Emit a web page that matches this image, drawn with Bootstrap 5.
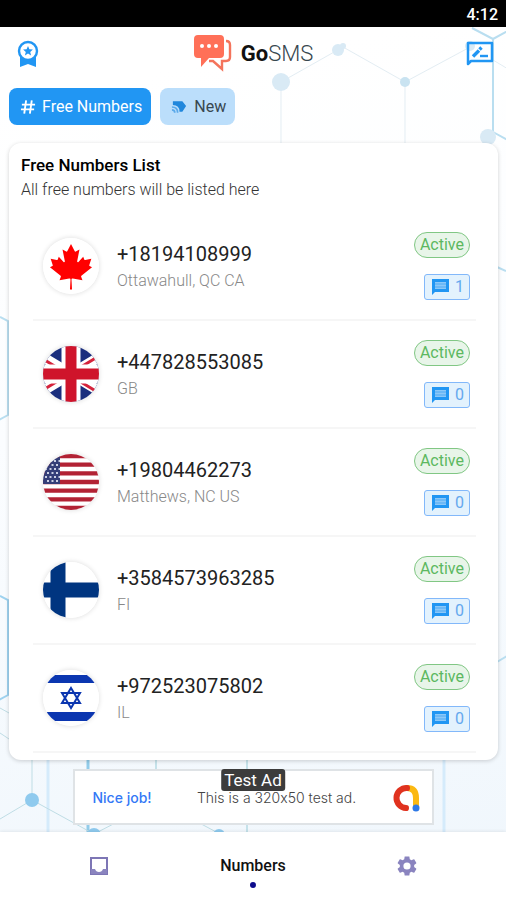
<!DOCTYPE html>
<html lang="en">
<head>
<meta charset="utf-8">
<meta name="viewport" content="width=device-width, initial-scale=1">
<title>GoSMS</title>
<link href="https://cdn.jsdelivr.net/npm/bootstrap@5.3.0/dist/css/bootstrap.min.css" rel="stylesheet">
<style>
body{font-family:Roboto,"Liberation Sans",sans-serif;color:#222;background:#fff}
svg{display:block;flex:none}
.screen{background:linear-gradient(170deg,#fff 10%,#fbfdff 45%,#eff6fc 100%);isolation:isolate;overflow:hidden}
.network{position:absolute;inset:0;z-index:-1}
.status-bar{height:27px;background:#000;color:#fff;font-size:16px;font-weight:500;padding-right:8px;padding-top:2px}
.top-bar{height:53px;padding:0 12px 0 16px}
.brand-name{font-size:22px;line-height:28px;color:#37474f;font-weight:300}
.brand-name b{font-weight:700;color:#111}
.tabs{padding:8px 9px 18px;gap:9px}
.tab-btn{height:37px;border-radius:8px;font-size:16px;line-height:20px;padding:0 9px 0 11px;gap:6px;border:0}
.tab-on,.tab-on:hover{background:#2196f3;color:#fff}
.tab-off,.tab-off:hover{background:#bbdefb;color:#37474f}
.panel{margin:0 8px 0 9px;border-radius:12px;background:#fff;box-shadow:0 1px 4px #0000002e;padding:12px 22px 7px 24px}
.panel-head{margin-left:-12px;padding-bottom:13px}
.panel-head h1{font-size:17px;line-height:20px;font-weight:500;margin:0 0 5px;color:#000}
.panel-head p{font-size:16px;line-height:20px;margin:0;color:#333;font-weight:300}
.number-row{height:108px;border-bottom:2px solid #f6f6f6;padding:0 6px 0 10px}
.flag{width:56px;height:56px;border-radius:50%;box-shadow:0 0 4px 1px #0000001a;overflow:hidden;margin-right:18px}
.num{font-size:20px;line-height:26px;color:#222}
.place{font-size:16px;line-height:20px;color:#888;font-weight:300;margin-top:4px}
.state{border:1px solid #81c784;background:#e8f5e9;color:#5cb860;border-radius:13px;font-size:16px;line-height:22px;padding:1px 5px}
.msgs,.msgs:hover{border:1px solid #82b8fa;background:#e3f2fd;color:#64a8ee;border-radius:3px;font-size:16px;line-height:24px;padding:0 5px 0 6px;gap:5px}
.ad{width:361px;height:56px;margin:9px auto 7px;border:2px solid #dfe3e6;background:#fff;padding:2px 10px 0 18px;font-family:Inter,sans-serif;font-size:14px;line-height:12px;font-weight:300;color:#444;font-feature-settings:"calt" 0}
.ad a{color:#3478f6;font-weight:500}
.ad-text{margin-left:12px}
.ad-tag{position:absolute;top:-2px;left:50%;transform:translateX(-50%);background:#3c3c3c;color:#fff;border-radius:3px;font:17px/22px Roboto,sans-serif;padding:0 3px;white-space:nowrap}
.bottom-bar{background:#fff;box-shadow:0 -1px 3px #00000012;min-height:68px}
.bottom-bar a{color:#111;font-size:16px;font-weight:500;line-height:20px;width:154px}
.dot{width:6px;height:6px;border-radius:50%;background:#0d0c8c;margin-top:6px}
</style>
<script src="https://cdn.jsdelivr.net/npm/bootstrap@5.3.0/dist/js/bootstrap.bundle.min.js"></script>
</head>
<body>
<div class="screen position-relative min-vh-100 d-flex flex-column">
<svg class="network w-100 h-100" viewBox="0 0 506 900" preserveAspectRatio="none" aria-hidden="true" fill="none">
<g stroke="#e3edf3"><path d="M281 82 343 47 405 82 472 46M281 82v70M405 82v70M493 60l20 12"/></g>
<g stroke="#b9def0" stroke-width="2"><path d="M472 28l21 11 20-11M493 39v93l18 10M0 317l8 4v94l-9 5M497 267l9 4M497 662l10-6"/><path d="M0 596l8 4v95l-9 5" stroke="#9ed2ef"/></g>
<path d="M156 750v30M247 750v84" stroke="#c5e2ea" stroke-width="2"/>
<path d="M48 750v84M444 755v80" stroke="#d5ebfb" stroke-width="3"/>
<path d="M88 750v84" stroke="#92ccea" stroke-width="3"/>
<g stroke="#bfdde5"><path d="M0 819 32 800 94 834 150 805M32 800v-50M190 818l30 16M0 708l9 5M0 733l9 6"/></g>
<g fill="#d9eaf5"><circle cx="281" cy="82" r="9"/><circle cx="338" cy="50" r="6"/><circle cx="343" cy="46" r="3"/><circle cx="405" cy="82" r="5" fill="#c9e3f1"/><circle cx="488" cy="137" r="8"/><circle cx="470" cy="46" r="5"/></g>
<g fill="#8fcaee"><circle cx="32" cy="800" r="7"/><circle cx="94" cy="835" r="7"/><circle cx="219" cy="835" r="6"/></g>
</svg>

<div class="status-bar d-flex align-items-center justify-content-end">4:12</div>

<header class="top-bar d-flex align-items-center justify-content-between">
<button class="btn p-0 border-0" aria-label="Premium">
<svg width="24" height="28" viewBox="0 0 24 28"><path d="M4 17h16v10l-8-3-8 3z" fill="#2196f3"/><circle cx="12" cy="11" r="9" fill="#fff" stroke="#2196f3" stroke-width="2.4"/><path d="M12 6l1.4 3.3 3.5.3-2.7 2.3.9 3.5-3.1-1.9-3.1 1.9.9-3.5-2.7-2.3 3.5-.3z" fill="#2196f3"/></svg>
</button>
<div class="d-flex align-items-center gap-2">
<svg width="40" height="38" viewBox="0 0 40 38"><path d="M33 6q4 0 4 4v12q0 4-4 4h-4v8l-9-8h-4" fill="none" stroke="#f4745c" stroke-width="2.4"/><path d="M5 0h22q4 0 4 4v15q0 4-4 4H16l-8 9v-9H5q-4 0-4-4V4q0-4 4-4z" fill="#ff7058"/><g fill="#fff"><circle cx="9" cy="11" r="2"/><circle cx="16" cy="11" r="2"/><circle cx="23" cy="11" r="2"/></g></svg>
<div class="brand-name"><b>Go</b>SMS</div>
</div>
<button class="btn p-0 border-0" aria-label="Feedback">
<svg width="28" height="26" viewBox="0 0 28 26" fill="none" stroke="#2196f3"><path d="M2 23V2h24v18H5z" stroke-width="2.5" stroke-linejoin="round"/><path d="M7 15.5l6-6" stroke-width="3.4"/><path d="M13.5 8.5l2-2" stroke-width="3.4"/><path d="M14 15h8" stroke-width="2.4"/></svg>
</button>
</header>

<nav class="tabs d-flex" aria-label="Lists">
<button class="btn tab-btn tab-on d-flex align-items-center"><svg width="16" height="16" viewBox="0 0 17 16" fill="none" stroke="#fff" stroke-width="2"><path d="M6.500 1l-2 14M12.500 1l-2 14M2 5.500h14M1 10.500h14"/></svg>Free Numbers</button>
<button class="btn tab-btn tab-off d-flex align-items-center"><svg width="17" height="16" viewBox="0 0 18 16"><path d="M2 2h10l4 5-4 6H9Q9 6 2 6z" fill="#2087dc"/><path d="M1 8q6 0 6 6M1 11q3 0 3 3" fill="none" stroke="#5aa9ea" stroke-width="1.8"/></svg>New</button>
</nav>

<main class="panel">
<div class="panel-head"><h1>Free Numbers List</h1><p>All free numbers will be listed here</p></div>
<ul class="list-unstyled mb-0">
<li class="number-row d-flex align-items-center">
<svg class="flag" viewBox="0 0 56 56"><path fill="#fff" d="M0 0h56v56H0z"/><path transform="translate(28 28.500) scale(.0113)" fill="red" d="m-90 2030 45-863a95 95 0 0 0-111-98l-859 151 116-320a65 65 0 0 0-20-73l-941-762 212-99a65 65 0 0 0 34-79l-186-572 542 115a65 65 0 0 0 73-38l105-247 423 454a65 65 0 0 0 111-57l-204-1052 327 189a65 65 0 0 0 91-27l332-652 332 652a65 65 0 0 0 91 27l327-189-204 1052a65 65 0 0 0 111 57l423-454 105 247a65 65 0 0 0 73 38l542-115-186 572a65 65 0 0 0 34 79l212 99-941 762a65 65 0 0 0-20 73l116 320-859-151a95 95 0 0 0-111 98l45 863z"/></svg>
<div class="flex-grow-1"><div class="num">+18194108999</div><div class="place">Ottawahull, QC CA</div></div>
<div class="d-flex flex-column align-items-end gap-3"><span class="state">Active</span><button class="btn msgs d-flex align-items-center"><svg width="19" height="18" viewBox="0 0 19 18"><path d="M1 17V1h17v13H4z" fill="#2196f3"/><path d="M4 4h11v7H4z" fill="#8cc8f8"/><path d="M4 6h11M4 9h11" stroke="#4faaf4"/></svg>1</button></div>
</li>
<li class="number-row d-flex align-items-center">
<svg class="flag" viewBox="0 0 56 56"><path fill="#1b2f7e" d="M0 0h56v56H0z"/><path d="M-10 5 66 51M-10 51 66 5" stroke="#fff" stroke-width="10"/><path d="M-10 5 28 28M66 51 28 28" stroke="#d5233b" stroke-width="3" transform="translate(0 2)"/><path d="M66 5 28 28M-10 51 28 28" stroke="#d5233b" stroke-width="3" transform="translate(0 -1)"/><path d="M28 0v56M0 28h56" stroke="#fff" stroke-width="19"/><path d="M28 0v56M0 28h56" stroke="#cf142b" stroke-width="11"/></svg>
<div class="flex-grow-1"><div class="num">+447828553085</div><div class="place">GB</div></div>
<div class="d-flex flex-column align-items-end gap-3"><span class="state">Active</span><button class="btn msgs d-flex align-items-center"><svg width="19" height="18" viewBox="0 0 19 18"><path d="M1 17V1h17v13H4z" fill="#2196f3"/><path d="M4 4h11v7H4z" fill="#8cc8f8"/><path d="M4 6h11M4 9h11" stroke="#4faaf4"/></svg>0</button></div>
</li>
<li class="number-row d-flex align-items-center">
<svg class="flag" viewBox="0 0 56 56"><path fill="#fff" d="M0 0h56v56H0z"/><path d="M0 2h56M0 10.600h56M0 19.300h56M0 28h56M0 36.700h56M0 45.400h56M0 54h56" stroke="#b22234" stroke-width="4.300"/><path fill="#343e78" d="M0 0h17v30H0z"/><path d="M2 7h15M4 11h13M2 15h15M4 19h13M2 23h15M4 27h13" stroke="#cbd0e4" stroke-width="2" stroke-dasharray="2 2.500"/></svg>
<div class="flex-grow-1"><div class="num">+19804462273</div><div class="place">Matthews, NC US</div></div>
<div class="d-flex flex-column align-items-end gap-3"><span class="state">Active</span><button class="btn msgs d-flex align-items-center"><svg width="19" height="18" viewBox="0 0 19 18"><path d="M1 17V1h17v13H4z" fill="#2196f3"/><path d="M4 4h11v7H4z" fill="#8cc8f8"/><path d="M4 6h11M4 9h11" stroke="#4faaf4"/></svg>0</button></div>
</li>
<li class="number-row d-flex align-items-center">
<svg class="flag" viewBox="0 0 56 56"><path fill="#fff" d="M0 0h56v56H0z"/><path d="M15 0v56M0 28h56" stroke="#003580" stroke-width="15"/></svg>
<div class="flex-grow-1"><div class="num">+3584573963285</div><div class="place">FI</div></div>
<div class="d-flex flex-column align-items-end gap-3"><span class="state">Active</span><button class="btn msgs d-flex align-items-center"><svg width="19" height="18" viewBox="0 0 19 18"><path d="M1 17V1h17v13H4z" fill="#2196f3"/><path d="M4 4h11v7H4z" fill="#8cc8f8"/><path d="M4 6h11M4 9h11" stroke="#4faaf4"/></svg>0</button></div>
</li>
<li class="number-row d-flex align-items-center">
<svg class="flag" viewBox="0 0 56 56"><path fill="#fff" d="M0 0h56v56H0z"/><path d="M0 5h56v8H0zM0 42h56v9H0z" fill="#0b36b0"/><path d="M28 18l9 15H19zM28 38l-9-15h18z" fill="none" stroke="#0b36b0" stroke-width="2"/></svg>
<div class="flex-grow-1"><div class="num">+972523075802</div><div class="place">IL</div></div>
<div class="d-flex flex-column align-items-end gap-3"><span class="state">Active</span><button class="btn msgs d-flex align-items-center"><svg width="19" height="18" viewBox="0 0 19 18"><path d="M1 17V1h17v13H4z" fill="#2196f3"/><path d="M4 4h11v7H4z" fill="#8cc8f8"/><path d="M4 6h11M4 9h11" stroke="#4faaf4"/></svg>0</button></div>
</li>
</ul>
</main>

<aside class="ad position-relative d-flex align-items-center justify-content-between">
<a href="#" class="text-decoration-none">Nice job!</a><span class="ad-text">This is a 320x50 test ad.</span>
<svg width="32" height="30" viewBox="0 0 32 30" fill="none" stroke-width="6" stroke-linecap="round"><path d="M18 5q9 0 9 10v9" stroke="#fbb811"/><path d="M18 5a10 10 0 1 0-1 20" stroke="#e0321f"/><circle cx="27" cy="25" r="3.500" fill="#2d78e6"/></svg>
<span class="ad-tag">Test Ad</span>
</aside>

<nav class="bottom-bar flex-grow-1 d-flex justify-content-center" aria-label="Main">
<a href="#" class="d-flex justify-content-center pt-4" aria-label="Inbox"><svg width="20" height="20" viewBox="0 0 20 20"><path d="M2 2h16v16H2z" fill="#fff" stroke="#7d76b5" stroke-width="2"/><path d="M2 13h4q1 3 4 3t4-3h4v5H2z" fill="#8a84bf"/></svg></a>
<a href="#" class="d-flex flex-column align-items-center pt-4 text-decoration-none" aria-current="page">Numbers<span class="dot"></span></a>
<a href="#" class="d-flex justify-content-center pt-4" aria-label="Settings"><svg width="20" height="20" viewBox="2 2 20 20"><path fill="#8a84bf" d="M19.140 12.940c.04-.3.060-.61.060-.94 0-.32-.02-.64-.07-.94l2.030-1.580c.18-.14.23-.41.12-.61l-1.920-3.320c-.12-.22-.37-.29-.59-.22l-2.390.96c-.5-.38-1.030-.7-1.620-.94l-.36-2.540c-.04-.24-.24-.41-.48-.41h-3.840c-.24 0-.43.170-.47.41l-.36 2.540c-.59.24-1.130.57-1.620.94l-2.390-.96c-.22-.08-.47 0-.59.22L2.740 8.870c-.12.21-.08.470.12.610l2.030 1.580c-.05.3-.09.630-.09.940s.02.640.07.940l-2.030 1.580c-.18.140-.23.410-.12.610l1.920 3.320c.12.220.370.290.590.220l2.390-.96c.5.380 1.030.7 1.620.94l.36 2.540c.05.240.24.410.48.410h3.840c.24 0 .44-.17.47-.41l.36-2.540c.59-.24 1.130-.56 1.620-.94l2.390.96c.22.080.47 0 .59-.22l1.920-3.320c.12-.22.070-.47-.12-.61zM12 15.600a3.600 3.600 0 1 1 0-7.200 3.600 3.600 0 0 1 0 7.200z"/></svg></a>
</nav>
</div>
</body>
</html>
